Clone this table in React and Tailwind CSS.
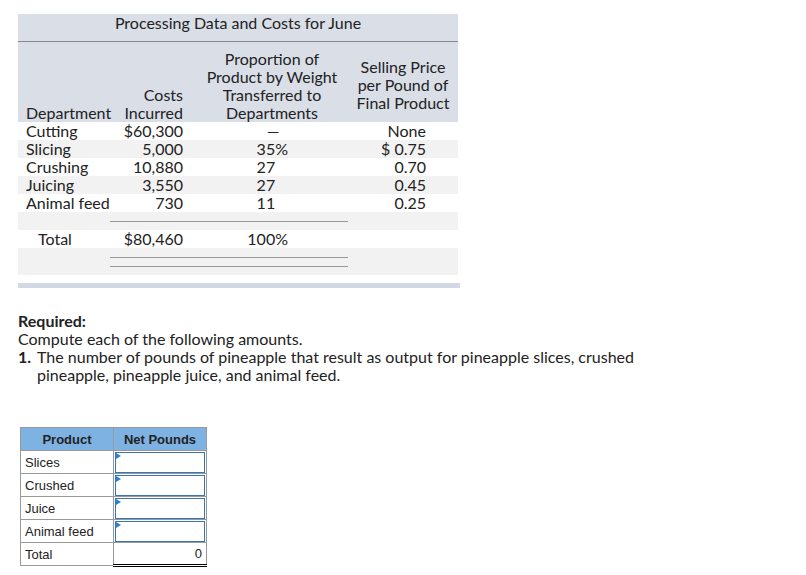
import React from "react";

const rows = [
  { dept: "Cutting", cost: "$60,300", prop: "—", price: "None" },
  { dept: "Slicing", cost: "5,000", prop: "35", pct: true, price: "$ 0.75" },
  { dept: "Crushing", cost: "10,880", prop: "27", price: "0.70" },
  { dept: "Juicing", cost: "3,550", prop: "27", price: "0.45" },
  { dept: "Animal feed", cost: "730", prop: "11", price: "0.25" },
];

const products = ["Slices", "Crushed", "Juice", "Animal feed"];

function Prop({ value, pct }) {
  if (value === "—") return <span className="block text-center pl-[2px]">—</span>;
  return (
    <span className="block text-right pr-[66px]">
      {value}
      <span className={pct ? "" : "invisible"}>%</span>
    </span>
  );
}

export default function App() {
  return (
    <div className="w-[806px] h-[575px] bg-white text-[#222] font-['Lato','Open_Sans',sans-serif] text-[16px] leading-[18px]">
      <div className="pt-[14px] pl-[18px]">
        {/* data table */}
        <div className="w-[440px]">
          <div className="bg-[#d9dee7] h-[28px] flex justify-center border-b border-[#888]">
            Processing Data and Costs for June
          </div>
          <div className="bg-[#d9dee7] h-[80px] grid grid-cols-[92px_80px_164px_104px] items-end">
            <div className="pl-[8px]">Department</div>
            <div className="text-right pr-[7px]">
              Costs
              <br />
              Incurred
            </div>
            <div className="text-center">
              Proportion of
              <br />
              Product by Weight
              <br />
              Transferred to
              <br />
              Departments
            </div>
            <div className="self-center text-center pr-[6px] pt-[6px]">
              Selling Price
              <br />
              per Pound of
              <br />
              Final Product
            </div>
          </div>
          {rows.map((r, i) => (
            <div
              key={r.dept}
              className={`grid grid-cols-[92px_80px_164px_104px] h-[18px] ${i % 2 ? "bg-[#f2f2f2]" : "bg-white"}`}
            >
              <div className="pl-[8px]">{r.dept}</div>
              <div className="text-right pr-[7px]">{r.cost}</div>
              <Prop value={r.prop} pct={r.pct} />
              <div className="text-right pr-[32px]">{r.price}</div>
            </div>
          ))}
          <div className="h-[18px] bg-[#f2f2f2] flex items-center">
            <div className="ml-[92px] w-[238px] border-t border-[#999]" />
          </div>
          <div className="grid grid-cols-[92px_80px_164px_104px] h-[18px]">
            <div className="pl-[20px]">Total</div>
            <div className="text-right pr-[7px]">$80,460</div>
            <Prop value="100" pct />
            <div />
          </div>
          <div className="h-[27px] bg-[#f2f2f2] pt-[9px]">
            <div className="ml-[92px] w-[238px] border-t border-[#999]" />
            <div className="ml-[92px] w-[238px] border-t border-[#999] mt-[8px]" />
          </div>
          <div className="mt-[8px] h-[5px] w-[442px] bg-[#d3d9e4]" />
        </div>

        {/* required */}
        <div className="mt-[24px] w-[645px]">
          <p className="font-bold">Required:</p>
          <p>Compute each of the following amounts.</p>
          <div className="flex">
            <span className="font-bold w-[19px] shrink-0">1.</span>
            <span>
              The number of pounds of pineapple that result as output for pineapple slices, crushed
              pineapple, pineapple juice, and animal feed.
            </span>
          </div>
        </div>

        {/* answer table */}
        <table className="mt-[43px] ml-[2px] border-collapse font-['Liberation_Sans',Arial,sans-serif] text-[13px] leading-[15px] text-[#222]">
          <thead>
            <tr className="bg-[#7eb2e3] h-[23px]">
              <th className="w-[93px] border border-[#999] font-bold text-center">Product</th>
              <th className="w-[93px] border border-[#999] font-bold text-center">Net Pounds</th>
            </tr>
          </thead>
          <tbody>
            {products.map((p) => (
              <tr key={p} className="h-[23px]">
                <td className="border border-[#999] pl-[4px] align-middle">{p}</td>
                <td className="border border-[#999] p-0">
                  <div className="relative h-[21px] mx-[1px] border border-[#3a75b8] bg-white">
                    <span className="absolute left-0 top-0 w-0 h-0 border-t-[3px] border-b-[3px] border-l-[5px] border-t-transparent border-b-transparent border-l-[#2f7fd0]" />
                  </div>
                </td>
              </tr>
            ))}
            <tr className="h-[23px]">
              <td className="border border-[#999] pl-[4px]">Total</td>
              <td className="border-t border-l border-r border-[#999] p-0 border-b-[3px] border-b-black border-double text-right pr-[4px]">
                0
              </td>
            </tr>
          </tbody>
        </table>
      </div>
    </div>
  );
}
